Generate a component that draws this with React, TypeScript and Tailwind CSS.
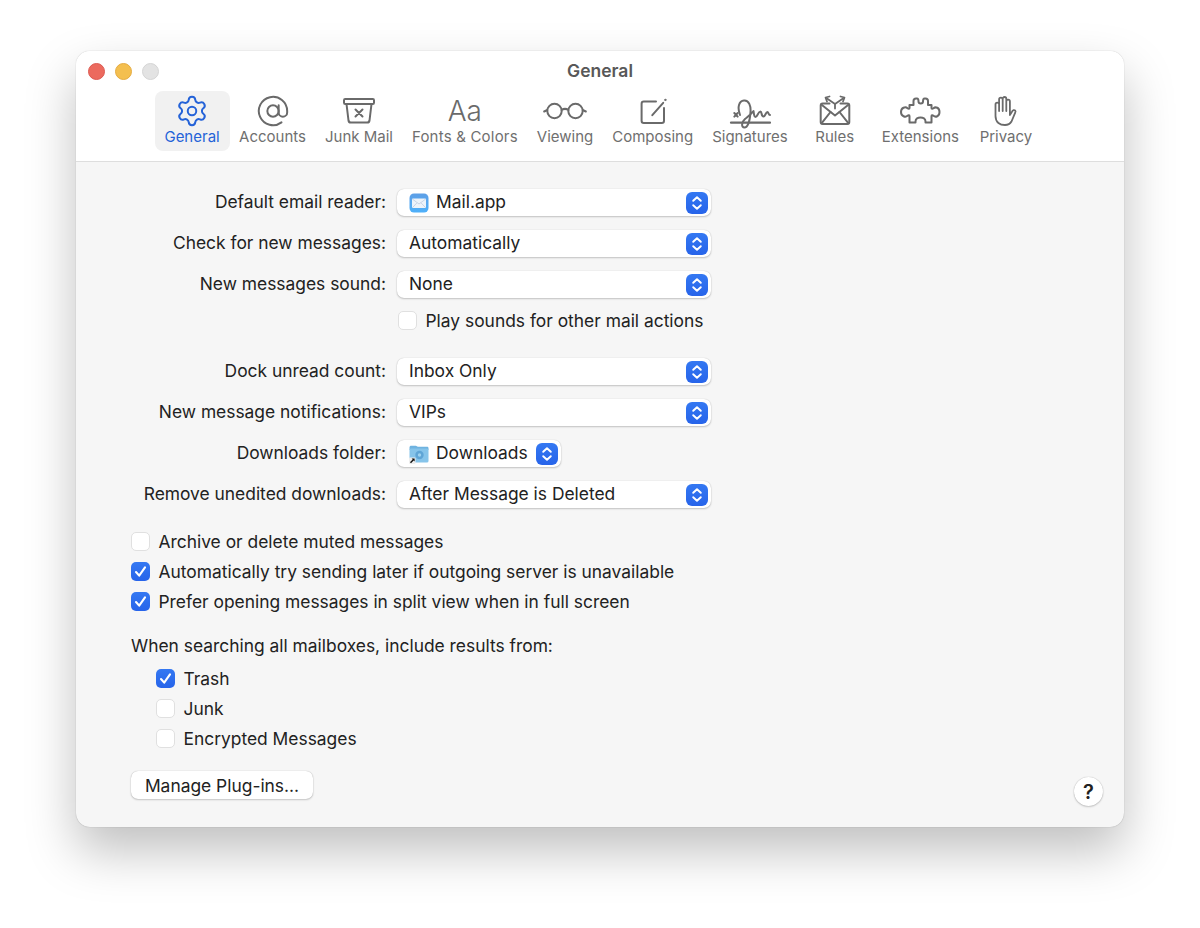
import React from "react";
import { Settings, AtSign } from "lucide-react";

const font = { fontFamily: "Inter, 'Liberation Sans', sans-serif" };

function Stepper() {
  return (
    <span className="flex h-[22px] w-[22px] items-center justify-center rounded-[6px] bg-gradient-to-b from-[#3478f2] to-[#2764ea]">
      <svg width="12" height="16" viewBox="0 0 12 16" fill="none" stroke="white" strokeWidth="1.9" strokeLinecap="round" strokeLinejoin="round">
        <path d="M2.2 5.8 6 2.2l3.8 3.6" />
        <path d="M2.2 10.2 6 13.8l3.8-3.6" />
      </svg>
    </span>
  );
}

function MailIcon() {
  return (
    <svg width="20" height="20" viewBox="0 0 20 20" className="shrink-0">
      <defs>
        <linearGradient id="mailg" x1="0" y1="0" x2="0" y2="1">
          <stop offset="0" stopColor="#5e9fe6" />
          <stop offset="1" stopColor="#4eb0fa" />
        </linearGradient>
      </defs>
      <rect x="0.5" y="0.5" width="19" height="19" rx="4.5" fill="url(#mailg)" />
      <rect x="3" y="5.5" width="14" height="9.5" rx="1" fill="#eef3fa" />
      <path d="M3.3 6 10 11l6.7-5M3.5 14.6 8 9.8M16.5 14.6 12 9.8" stroke="#b7c6dc" strokeWidth="0.7" fill="none" />
    </svg>
  );
}

function FolderIcon() {
  return (
    <svg width="20" height="21" viewBox="0 0 20 21" className="shrink-0">
      <path d="M0.500 4.500C0.500 3.400 1.300 2.800 2.100 2.800h4.800c.8 0 1.100.9 2 .9h9.200c.9 0 1.400.6 1.400 1.400v2H0.500z" fill="#6fb3e0" />
      <rect x="0.500" y="5.400" width="19" height="14.200" rx="1.600" fill="#86c4ea" />
      <circle cx="10.500" cy="12" r="4.200" fill="#5fa5d6" />
      <circle cx="10.500" cy="12" r="1.700" fill="#9ed3f0" />
      <rect x="0" y="14.500" width="6.500" height="6.500" rx="1" fill="#eeeeee" />
      <path d="M1.500 19.700 4.600 16.400" stroke="#111111" strokeWidth="1.400" fill="none" />
      <path d="M2.600 15.600h3v3z" fill="#111111" />
    </svg>
  );
}

function Select({ label, value, icon, w = "w-[314px]" }: { label: string; value: string; icon?: React.ReactNode; w?: string }) {
  return (
    <div className="flex h-[27px] items-center gap-[11px]">
      <span className="w-[255px] shrink-0 whitespace-nowrap pb-[2px] text-right">{label}</span>
      <div className={`flex h-[27px] items-center justify-between rounded-[7px] bg-white pl-[12px] pr-[3px] shadow-[0_0_1px_rgba(0,0,0,0.22),0_1px_2px_rgba(0,0,0,0.2)] ${w}`}>
        <span className="flex items-center gap-[7px] whitespace-nowrap">
          {icon}
          <span className="pb-[2px]">{value}</span>
        </span>
        <Stepper />
      </div>
    </div>
  );
}

function Check({ label, on = false }: { label: string; on?: boolean }) {
  return (
    <div className="flex h-[20px] items-center gap-[8.5px] whitespace-nowrap">
      {on ? (
        <span className="flex h-[19px] w-[19px] items-center justify-center rounded-[5px] bg-gradient-to-b from-[#3478f2] to-[#2764ea]">
          <svg width="13" height="13" viewBox="0 0 13 13" fill="none" stroke="white" strokeWidth="2.1" strokeLinecap="round" strokeLinejoin="round">
            <path d="M2 7l3.2 3.6L11 2.4" />
          </svg>
        </span>
      ) : (
        <span className="h-[19px] w-[19px] rounded-[5px] border border-[#e0e0e0] bg-white" />
      )}
      <span className="pt-[2px]">{label}</span>
    </div>
  );
}

const iconColor = "#6a6a6a";

function JunkIcon() {
  return (
    <svg width="34" height="28" viewBox="0 0 34 28" fill="none" stroke={iconColor} strokeWidth="2" strokeLinecap="round" strokeLinejoin="round">
      <rect x="2" y="2" width="30" height="5" rx="1.200" />
      <path d="M4.500 7 6.500 23.500c.2 1.300 1 2 2.200 2h16.600c1.200 0 2-.7 2.200-2L29.500 7" />
      <path d="M13.500 12.500l7 7M20.500 12.500l-7 7" />
    </svg>
  );
}

function GlassesIcon() {
  return (
    <svg width="44" height="20" viewBox="0 0 44 20" fill="none" stroke={iconColor} strokeWidth="2" strokeLinecap="round">
      <circle cx="11.500" cy="10" r="7.200" />
      <circle cx="32.500" cy="10" r="7.200" />
      <path d="M18.500 9c2-1.300 5-1.300 7 0" />
      <path d="M4.300 9 1.200 10.500M39.700 9l3.100 1.500" />
    </svg>
  );
}

function ComposeIcon() {
  return (
    <svg width="28" height="28" viewBox="0 0 28 28" fill="none" stroke={iconColor} strokeWidth="2" strokeLinecap="round" strokeLinejoin="round">
      <path d="M17 4.500H4.800C3.500 4.500 2.600 5.400 2.600 6.700v17c0 1.300.9 2.200 2.200 2.200h18c1.300 0 2.200-.9 2.200-2.200V11" />
      <path d="M13.300 18.200 24.200 5.800" />
      <circle cx="26.300" cy="2.900" r="0.700" fill={iconColor} strokeWidth="1" />
    </svg>
  );
}

function SignatureIcon() {
  return (
    <svg width="42" height="32" viewBox="-1 -2 42 32" className="overflow-visible" fill="none" stroke={iconColor} strokeWidth="2" strokeLinecap="round" strokeLinejoin="round">
      <path d="M1 25.700h39" strokeWidth="2.200" />
      <path d="M4.300 16l3.400 3.600M7.700 16l-3.400 3.600" />
      <path d="M10 18C7 10 9 4 14 3.500C19 3 21 9 20.500 15C20 23 18 30.500 14.500 30.500C11 30.500 11.500 25 15 22C18 19.500 21 17.500 23.500 14C24 17.500 24 20 25.500 20C27.500 20 28 14.500 30.500 14.500C32 14.500 31 19.500 33.500 19.500C35.500 19.500 35.500 15 37.500 15C38.500 15 38.500 18 40 18" />
    </svg>
  );
}

function RulesIcon() {
  return (
    <svg width="32" height="32" viewBox="0 0 32 32" fill="none" stroke={iconColor} strokeWidth="2" strokeLinecap="round" strokeLinejoin="round">
      <path d="M10.500 8.500H3.700C2.500 8.500 1.700 9.300 1.700 10.500v16.500c0 1.200.8 2 2 2h24.600c1.200 0 2-.8 2-2V10.500c0-1.200-.8-2-2-2h-6.800" />
      <path d="M2.300 9.500 16 20.500l13.700-11" />
      <path d="M2.500 28.300 11.500 17M29.500 28.300 20.500 17" />
      <path d="M16 13.500V9L8 3.500M16 9l8-5.500" strokeWidth="1.800" />
      <path d="M10.500 1.500 6.500 2.500l1.500 4M21.500 1.500l4 1-1.500 4" strokeWidth="1.800" />
    </svg>
  );
}

function PuzzleIcon() {
  return (
    <svg width="42" height="28" viewBox="0 0 42 28" fill="none" stroke={iconColor} strokeWidth="2" strokeLinecap="round" strokeLinejoin="round">
      <path d="M10.500 8H14.500V4C14.500 2.500 15.500 1.500 17 1.500H18C19.500 1.500 19.500 3 19.500 4.500C19.500 7 24 7 24 4.500C24 3 24 1.500 25.500 1.500H26.500C28 1.500 29 2.500 29 4V8H32.500V11C32.500 12 33.500 12 34.500 11.200C36.500 9.500 40.500 10.500 40.500 15C40.500 19.500 36.500 20.500 34.500 18.800C33.500 18 32.500 18.200 32.500 19.200V25.500H26.500V24.500C26.500 19 16.500 19 16.500 24.500V25.500H10.500V19.200C10.500 18.200 9.500 18 8.500 18.800C6.500 20.500 2 19.500 2 15C2 10.500 6.500 9.500 8.500 11.200C9.500 12 10.500 12 10.500 11Z" />
    </svg>
  );
}

function HandIcon() {
  return (
    <svg width="26" height="32" viewBox="0 0 26 32" fill="none" stroke={iconColor} strokeWidth="1.800" strokeLinecap="round" strokeLinejoin="round">
      <path d="M2.500 21V9.500a1.800 1.800 0 0 1 3.600 0V16M6.100 16V4.500a1.800 1.800 0 0 1 3.600 0V16M9.700 16V3.800a1.800 1.800 0 0 1 3.600 0V16M13.300 16V6.500a1.800 1.800 0 0 1 3.600 0V20l2.200-3.500c.8-1.400 2.200-1.700 3-1.100.6.5.6 1.300.1 2.200L18.500 26.500c-1.500 2.500-3.500 3.500-6.500 3.500-5 0-9.500-2.500-9.500-9" />
    </svg>
  );
}

const tabs: { label: string; icon: React.ReactNode; active?: boolean; wide?: boolean }[] = [
  { label: "General", active: true, icon: <Settings size={34} strokeWidth={1.4} color="#2563d8" /> },
  { label: "Accounts", icon: <AtSign size={34} strokeWidth={1.4} color={iconColor} /> },
  { label: "Junk Mail", icon: <JunkIcon /> },
  { label: "Fonts & Colors", wide: true, icon: <span className="text-[28px] font-light leading-none text-[#6a6a6a]">Aa</span> },
  { label: "Viewing", icon: <GlassesIcon /> },
  { label: "Composing", icon: <ComposeIcon /> },
  { label: "Signatures", icon: <SignatureIcon /> },
  { label: "Rules", icon: <RulesIcon /> },
  { label: "Extensions", icon: <PuzzleIcon /> },
  { label: "Privacy", icon: <HandIcon /> },
];

export default function App() {
  return (
    <div style={font} className="h-[928px] w-[1200px] overflow-hidden bg-white pl-[76px] pt-[51px]">
      <div className="h-[776px] w-[1048px] overflow-hidden rounded-[14px] bg-[#f6f6f6] shadow-[0_0_1px_rgba(0,0,0,0.35),0_24px_50px_rgba(0,0,0,0.25)]">
        <div className="h-[111px] border-b border-[#dedede] bg-white">
          <div className="grid h-[40px] grid-cols-[1fr_auto_1fr] items-center">
            <div className="flex items-center gap-[10px] pl-[12px]">
              <span className="h-[17px] w-[17px] rounded-full border border-[#dc5a52] bg-[#ec6a5e]" />
              <span className="h-[17px] w-[17px] rounded-full border border-[#e4ab42] bg-[#f4bf4f]" />
              <span className="h-[17px] w-[17px] rounded-full border border-[#d4d4d4] bg-[#e3e3e3]" />
            </div>
            <span className="text-[17.5px] font-semibold text-[#585858]">General</span>
            <span />
          </div>
          <div className="flex justify-center pr-[2px]">
            {tabs.map((t) => (
              <div
                key={t.label}
                className={`flex h-[60px] min-w-[75px] flex-col items-center rounded-[8px] px-[9.5px] pt-[4px] ${t.active ? "bg-[#f1f1f1]" : ""}`}
              >
                <span className="flex h-[32px] items-center justify-center">{t.icon}</span>
                <span className={`whitespace-nowrap text-[15px] leading-[20px] ${t.wide ? "tracking-[0.2px]" : ""} ${t.active ? "text-[#2563d8]" : "text-[#6f6f6f]"}`}>
                  {t.label}
                </span>
              </div>
            ))}
          </div>
        </div>

        <div className="flex flex-col pl-[55px] pr-[21px] pt-[27px] text-[17.4px] leading-[24px] text-[#222222]">
          <div className="flex flex-col gap-[14px]">
            <Select label="Default email reader:" value="Mail.app" icon={<MailIcon />} />
            <Select label="Check for new messages:" value="Automatically" />
            <Select label="New messages sound:" value="None" />
          </div>
          <div className="ml-[267px] mt-[12px]">
            <Check label="Play sounds for other mail actions" />
          </div>
          <div className="mt-[28px] flex flex-col gap-[14px]">
            <Select label="Dock unread count:" value="Inbox Only" />
            <Select label="New message notifications:" value="VIPs" />
            <Select label="Downloads folder:" value="Downloads" icon={<FolderIcon />} w="w-[164px]" />
            <Select label="Remove unedited downloads:" value="After Message is Deleted" />
          </div>
          <div className="mt-[23px] flex flex-col gap-[10px]">
            <Check label="Archive or delete muted messages" />
            <Check on label="Automatically try sending later if outgoing server is unavailable" />
            <Check on label="Prefer opening messages in split view when in full screen" />
          </div>
          <div className="mt-[25px] h-[20px] leading-[20px]">When searching all mailboxes, include results from:</div>
          <div className="ml-[25px] mt-[12px] flex flex-col gap-[10px]">
            <Check on label="Trash" />
            <Check label="Junk" />
            <Check label="Encrypted Messages" />
          </div>
          <div className="mt-[23px] flex items-start justify-between">
            <button className="flex h-[28px] w-[182px] items-center justify-center rounded-[7px] bg-white pt-[1px] shadow-[0_0_1px_rgba(0,0,0,0.3),0_1px_2px_rgba(0,0,0,0.18)]">
              Manage Plug-ins...
            </button>
            <button className="mt-[6px] flex h-[29px] w-[29px] items-center justify-center rounded-full bg-white text-[20px] font-semibold shadow-[0_0_1px_rgba(0,0,0,0.3),0_1px_2px_rgba(0,0,0,0.18)]">
              ?
            </button>
          </div>
        </div>
      </div>
    </div>
  );
}
